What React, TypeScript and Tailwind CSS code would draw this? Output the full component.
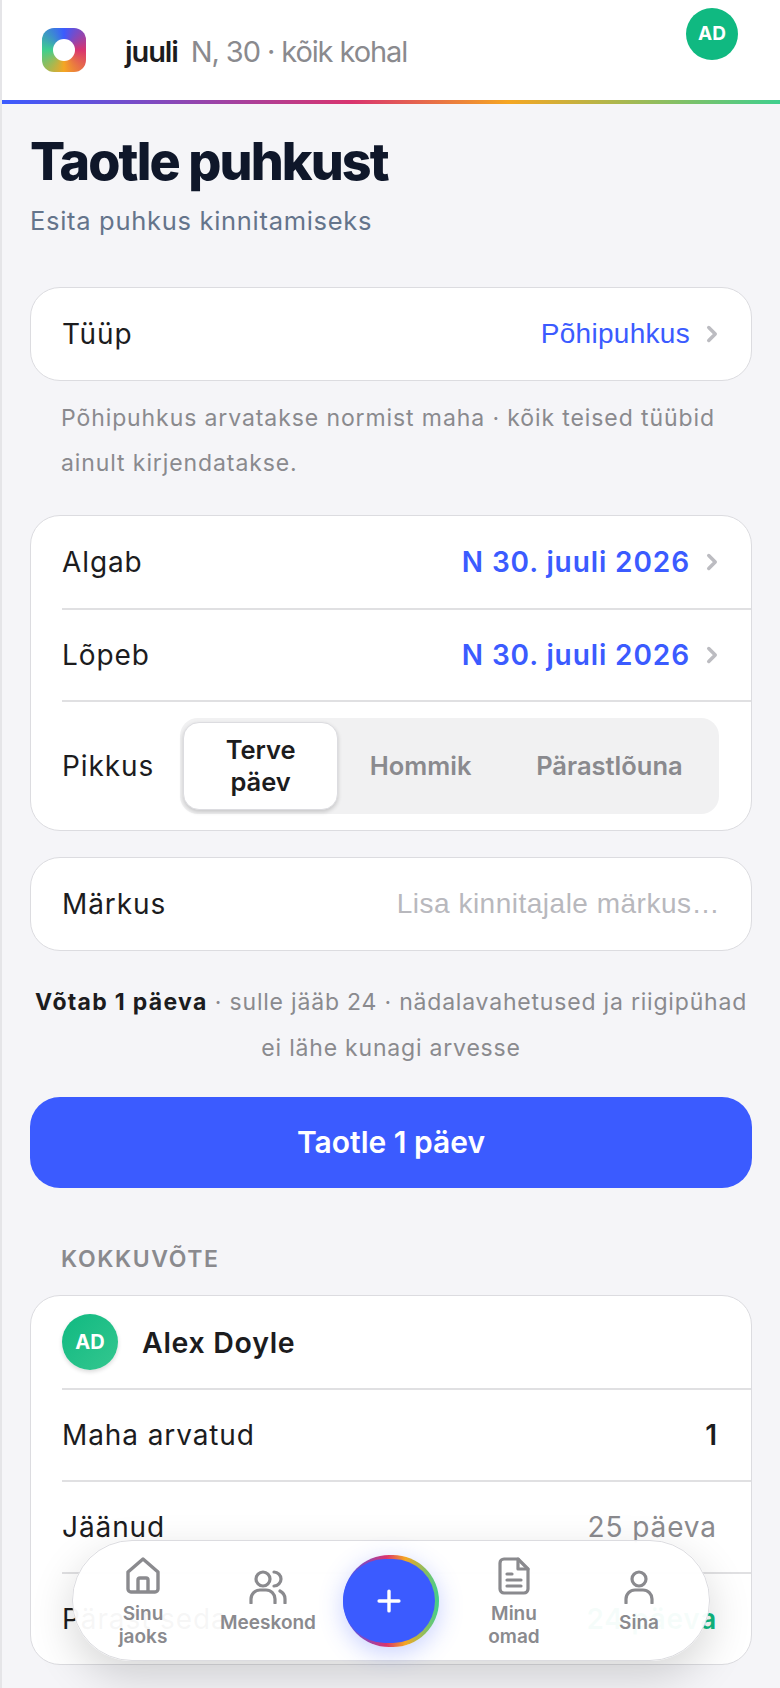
import React from 'react';
import { ChevronRight, Plus } from 'lucide-react';

const rainbow = 'bg-[linear-gradient(90deg,#3b5bff,#d9346f_45%,#f5a623_65%,#3fcf8e)]';

const HomeIcon = () => (
  <svg width="36" height="38" viewBox="0 0 36 38" fill="none" stroke="#8a8a8e" strokeWidth="3.4" strokeLinejoin="round">
    <path d="M3 15 18 2l15 13v17a3 3 0 0 1-3 3H6a3 3 0 0 1-3-3z" />
    <path d="M13 35V23a2 2 0 0 1 2-2h6a2 2 0 0 1 2 2v12" />
  </svg>
);

const TeamIcon = () => (
  <svg width="38" height="34" viewBox="0 0 38 34" fill="none" stroke="#8a8a8e" strokeWidth="3.2" strokeLinecap="round">
    <circle cx="14" cy="9" r="7" />
    <path d="M2 33v-4a9 9 0 0 1 9-9h6a9 9 0 0 1 9 9v4" />
    <path d="M25 2a7 7 0 0 1 0 14M31 21a9 9 0 0 1 5 8v4" />
  </svg>
);

const DocIcon = () => (
  <svg width="32" height="38" viewBox="0 0 32 38" fill="none" stroke="#8a8a8e" strokeWidth="3.2" strokeLinecap="round" strokeLinejoin="round">
    <path d="M20 2H6a4 4 0 0 0-4 4v26a4 4 0 0 0 4 4h20a4 4 0 0 0 4-4V12z" />
    <path d="M20 2v10h10M9 17h5M9 23h14M9 29h14" />
  </svg>
);

const UserIcon = () => (
  <svg width="30" height="34" viewBox="0 0 30 34" fill="none" stroke="#8a8a8e" strokeWidth="3.2" strokeLinecap="round">
    <circle cx="15" cy="9" r="7" />
    <path d="M2 33v-4a9 9 0 0 1 9-9h8a9 9 0 0 1 9 9v4" />
  </svg>
);

const Row = ({ label, value, date, height = 'h-[92px]' }: { label: string; value: string; date?: boolean; height?: string }) => (
  <div className={`flex ${height} items-center justify-between pr-[26px]`}>
    <span className="text-[28px] tracking-[0.9px] text-[#1c1c1e]">{label}</span>
    <div className="flex items-center gap-[9px]">
      <span
        className={`text-[#3b5bff] ${
          date ? 'text-[28px] font-semibold tracking-[0.9px]' : "font-['Liberation_Sans',sans-serif] text-[28px] tracking-[0.3px]"
        }`}
      >
        {value}
      </span>
      <ChevronRight size={26} strokeWidth={3.2} className="text-[#bcbcc1]" />
    </div>
  </div>
);

const Stat = ({ label, children }: { label: string; children: React.ReactNode }) => (
  <div className="flex h-[92px] items-center justify-between border-t-2 border-[#e0e0e2] pr-[34px]">
    <span className="text-[28px] tracking-[0.9px] text-[#1c1c1e]">{label}</span>
    {children}
  </div>
);

const NavItem = ({ icon, label }: { icon: React.ReactNode; label: React.ReactNode }) => (
  <div className="flex w-[100px] flex-col items-center gap-[7px] pt-[3px]">
    {icon}
    <span className="text-center text-[19px] leading-[23px] font-semibold text-[#8a8a8e]">{label}</span>
  </div>
);

export default function App() {
  return (
    <div className="relative h-[1688px] overflow-hidden border-l-2 border-[#e5e5e8] bg-[#f5f5f8] font-['Inter',sans-serif]">
      {/* Top bar */}
      <header className="relative flex h-[100px] items-center bg-white pl-[40px]">
        <div className="flex h-[44px] w-[44px] items-center justify-center rounded-[12px] bg-[conic-gradient(#3b5bff,#d9346f_25%,#f5a623_50%,#3fcf8e_75%,#3b5bff)]">
          <div className="h-[22px] w-[22px] rounded-full bg-white" />
        </div>
        <div className="mt-[4px] ml-[39px] flex items-baseline gap-[13px] text-[29px] tracking-[-1.1px]">
          <span className="font-semibold text-[#1c1c1e]">juuli</span>
          <span className="text-[#8a8a8e]">N, 30 · kõik kohal</span>
        </div>
        <div className="absolute top-[8px] right-[42px] flex h-[52px] w-[52px] items-center justify-center rounded-full bg-[#10b981] text-[19px] font-bold text-white">
          AD
        </div>
      </header>
      <div className={`h-[4px] ${rainbow}`} />

      <main className="px-[28px]">
        <h1 className="mt-[23px] text-[52px] leading-[70px] font-extrabold tracking-[-1.9px] text-[#0f172a]">Taotle puhkust</h1>
        <p className="mt-[6px] text-[25.5px] leading-[36px] tracking-[0.7px] text-[#64748b]">Esita puhkus kinnitamiseks</p>

        <section className="mt-[48px] rounded-[30px] border border-[#dcdce0] bg-white pl-[31px]">
          <Row label="Tüüp" value="Põhipuhkus" />
        </section>
        <p className="mt-[15px] px-[31px] text-[23px] leading-[45px] tracking-[0.9px] text-[#8a8a8e]">
          Põhipuhkus arvatakse normist maha · kõik teised tüübid ainult kirjendatakse.
        </p>

        <section className="mt-[29px] rounded-[30px] border border-[#dcdce0] bg-white pl-[31px]">
          <Row label="Algab" value="N 30. juuli 2026" date />
          <div className="border-t-2 border-[#e0e0e2]">
            <Row label="Lõpeb" value="N 30. juuli 2026" date height="h-[90px]" />
          </div>
          <div className="flex h-[130px] items-center gap-[26px] border-t-2 border-[#e0e0e2] pr-[32px]">
            <span className="text-[28px] tracking-[0.9px] text-[#1c1c1e]">Pikkus</span>
            <div className="flex h-[96px] flex-1 items-center rounded-[18px] bg-[#f1f1f2] pl-[3px] text-[25.5px] font-semibold">
              <div className="flex h-[88px] w-[155px] items-center justify-center rounded-[16px] border border-[#dcdce0] bg-white text-center leading-[32px] text-[#1c1c1e] shadow-[0_2px_4px_rgba(0,0,0,0.18)]">
                Terve<br />päev
              </div>
              <span className="ml-[31px] w-[103px] text-center text-[#8a8a8e]">Hommik</span>
              <span className="ml-[64px] text-center text-[#8a8a8e]">Pärastlõuna</span>
            </div>
          </div>
        </section>

        <section className="mt-[26px] flex h-[94px] items-center justify-between rounded-[30px] border border-[#dcdce0] bg-white px-[31px]">
          <span className="text-[28px] tracking-[0.9px] text-[#1c1c1e]">Märkus</span>
          <span className="font-['Liberation_Sans',sans-serif] text-[28px] tracking-[0.5px] text-[#b8b8bd]">Lisa kinnitajale märkus…</span>
        </section>

        <p className="mt-[28px] text-center text-[23px] leading-[46px] tracking-[0.8px] text-[#8a8a8e]">
          <span className="font-bold tracking-[1.3px] text-[#1c1c1e]">Võtab 1 päeva</span> · sulle jääb 24 · nädalavahetused ja riigipühad ei lähe kunagi arvesse
        </p>

        <button className="mt-[26px] flex h-[91px] w-full items-center justify-center rounded-[30px] bg-[#3b5bff] text-[30px] font-semibold text-white">
          Taotle 1 päev
        </button>

        <h2 className="mt-[56px] pl-[31px] text-[23px] leading-[30px] font-semibold tracking-[1.6px] text-[#8a8a8e]">KOKKUVÕTE</h2>

        <section className="mt-[21px] rounded-[30px] border border-[#dcdce0] bg-white pl-[31px]">
          <div className="flex h-[92px] items-center gap-[24px]">
            <div className="flex h-[56px] w-[56px] items-center justify-center rounded-full bg-[linear-gradient(135deg,#10b981,#34c78f)] text-[20px] font-bold text-white shadow-[0_2px_4px_rgba(0,0,0,0.15)]">
              AD
            </div>
            <span className="pt-[3px] text-[28.5px] font-semibold tracking-[0.7px] text-[#1c1c1e]">Alex Doyle</span>
          </div>
          <Stat label="Maha arvatud">
            <span className="text-[28px] font-semibold text-[#1c1c1e]">1</span>
          </Stat>
          <Stat label="Jäänud">
            <span className="text-[28px] tracking-[0.9px] text-[#8a8a8e]">25 päeva</span>
          </Stat>
          <Stat label="Pärast seda">
            <span className="text-[28px] font-semibold tracking-[0.7px] text-[#10b981]">24 päeva</span>
          </Stat>
        </section>
      </main>

      {/* Floating tab bar */}
      <nav className="absolute top-[1540px] left-[70px] flex h-[121px] w-[638px] items-center justify-between rounded-[60px] border border-[#dcdce0] bg-white/96 px-[20px] shadow-[0_16px_44px_rgba(0,0,0,0.16)]">
        <NavItem icon={<HomeIcon />} label={<>Sinu<br />jaoks</>} />
        <NavItem icon={<TeamIcon />} label="Meeskond" />
        <div className={`flex h-[92px] w-[96px] flex-none py-[4px] pr-[4px] ${rainbow} rounded-full shadow-[0_6px_24px_rgba(59,91,255,0.28)]`}>
          <div className="flex flex-1 items-center justify-center rounded-full bg-[#3b5bff]">
            <Plus size={34} strokeWidth={2.4} className="text-white" />
          </div>
        </div>
        <NavItem icon={<DocIcon />} label={<>Minu<br />omad</>} />
        <NavItem icon={<UserIcon />} label="Sina" />
      </nav>
    </div>
  );
}
